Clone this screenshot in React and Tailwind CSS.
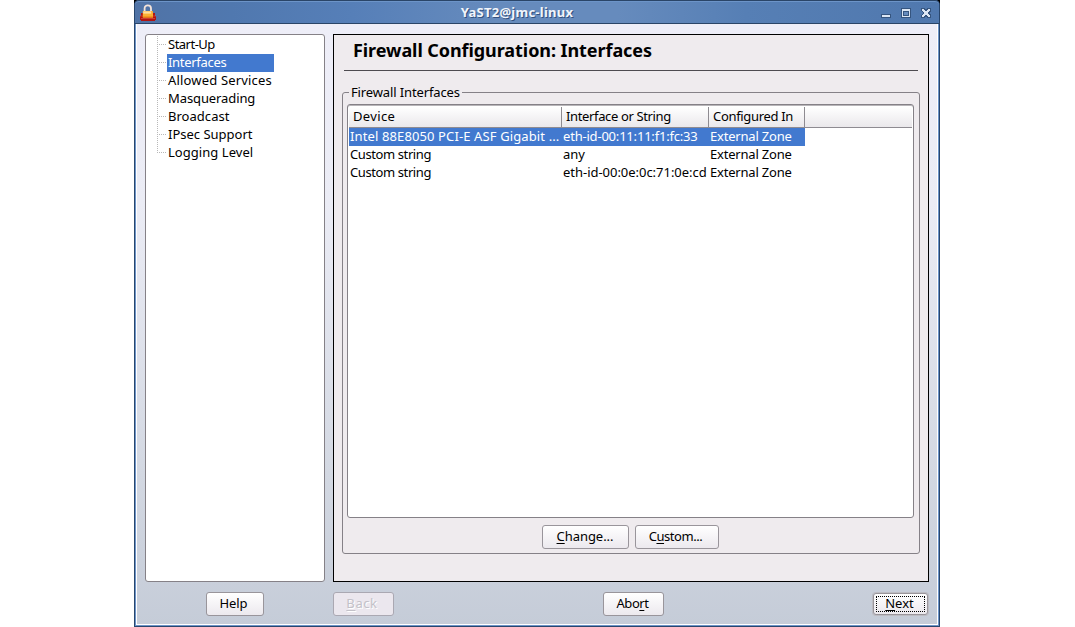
import React from 'react';

const navItems = [
  { label: 'Start-Up', tracking: 'tracking-[-0.5px]' },
  { label: 'Interfaces', tracking: 'tracking-[-0.3px]' },
  { label: 'Allowed Services', tracking: 'tracking-[0.17px]' },
  { label: 'Masquerading', tracking: 'tracking-[-0.1px]' },
  { label: 'Broadcast', tracking: 'tracking-[0.03px]' },
  { label: 'IPsec Support', tracking: 'tracking-[0px]' },
  { label: 'Logging Level', tracking: 'tracking-[0.05px]' },
];

const rows = [
  { device: 'Intel 88E8050 PCI-E ASF Gigabit ...', deviceTracking: 'tracking-[0.12px]', name: 'eth-id-00:11:11:f1:fc:33', nameTracking: 'tracking-[-0.2px]' },
  { device: 'Custom string', deviceTracking: 'tracking-[-0.4px]', name: 'any', nameTracking: 'tracking-[0px]' },
  { device: 'Custom string', deviceTracking: 'tracking-[-0.4px]', name: 'eth-id-00:0e:0c:71:0e:cd', nameTracking: 'tracking-[-0.03px]' },
];

function LockIcon() {
  return (
    <svg width="16" height="18" viewBox="0 0 16 18" className="block">
      <path d="M1 9h14v3h1v4h-1v1H1v-1H0v-4h1z" fill="#b01512" />
      <path d="M0 12h3M13 12h3M1 14.5h14" stroke="#dd5a4a" strokeWidth="0.6" />
      <path d="M4.6 8V4.6C4.6 2.2 6 1.4 7.8 1.4s3.2.8 3.2 3.2V8" fill="none" stroke="#f4e4da" strokeWidth="1.8" />
      <rect x="2.8" y="7" width="10.2" height="6.6" rx="0.6" fill="#fbb033" />
      <path d="M3.2 7.4h8v2.2h-8z" fill="#ffdfa0" />
      <path d="M2.8 12.4H13v1.2H2.8z" fill="#ee8a18" />
    </svg>
  );
}

function TitleBar() {
  return (
    <div className="flex h-[24px] shrink-0 items-center rounded-t-[4px] border-y border-y-[#2a4568] bg-[linear-gradient(90deg,#5073a6_0%,#5078af_12%,#567fb8_27%,#668bbd_45%,#668bbd_60%,#567fb5_76%,#5078ae_100%)] shadow-[inset_0_1px_0_#6c94c8]">
      <div className="w-[100px] pl-[5px] pt-[2px]"><LockIcon /></div>
      <div className="flex-1 pr-[81px] text-center text-[13px] font-bold leading-[20px] tracking-[0.25px] text-[#f1f5fb] [text-shadow:1px_1px_0_#34527f]">YaST2@jmc-linux</div>
      <svg width="52" height="14" viewBox="0 0 52 14" className="mr-[7px] mt-[2px] block" shapeRendering="crispEdges">
        <path d="M1 8h10v4H1z" fill="#36557f" />
        <path d="M2 9h8v2H2z" fill="#dce6f4" />
        <path d="M21 2h10v10H21z" fill="#36557f" />
        <path d="M22 3h8v8h-8z" fill="#dce6f4" />
        <path d="M23 5h6v5h-6z" fill="#36557f" />
        <path d="M24 6h4v3h-4z" fill="#668bbd" />
        <path d="M41 2h4l1 2 1-2h4v3l-2 2 2 2v3h-4l-1-2-1 2h-4V9l2-2-2-2z" fill="#36557f" />
        <path d="M42 3h2v1h1v1h2V4h1V3h2v2h-1v1h-1v2h1v1h1v2h-2v-1h-1V9h-2v1h-1v1h-2V9h1V8h1V6h-1V5h-1z" fill="#dce6f4" />
      </svg>
    </div>
  );
}

function Tree() {
  return (
    <div className="w-[180px] rounded-[3px] border border-[#858187] bg-white pt-px">
      {navItems.map((item, i) => (
        <div key={item.label} className="flex h-[18px] leading-[16px]">
          <div className={i === navItems.length - 1 ? 'ml-[11px] h-[9px] w-px bg-[repeating-linear-gradient(180deg,#b8b8b8_0_1px,transparent_1px_2px)]' : 'ml-[11px] h-[18px] w-px bg-[repeating-linear-gradient(180deg,#b8b8b8_0_1px,transparent_1px_2px)]'} />
          <div className="mt-[8px] h-px w-[9px] bg-[repeating-linear-gradient(90deg,transparent_0_1px,#b8b8b8_1px_2px)]" />
          <div className={i === 1 ? 'h-[18px] w-[107px] bg-[#4279cf] pl-px text-white' : 'w-[107px] pl-px'}>
            <span className={item.tracking}>{item.label}</span>
          </div>
        </div>
      ))}
    </div>
  );
}

function Button({ className, children }) {
  return (
    <button className={`flex items-center justify-center rounded-[3px] border pb-[3px] ${className}`}>
      <span>{children}</span>
    </button>
  );
}

const normal = 'border-[#99959b] bg-gradient-to-b from-white to-[#ece9ee]';

function Key({ children }) {
  return <span className="underline decoration-1 underline-offset-2">{children}</span>;
}

function Table() {
  return (
    <div className="mr-[1px] mt-[2px] flex h-[414px] flex-col rounded-[3px] border border-[#858187] bg-white px-px pt-[2px] shadow-[inset_0_1px_0_#b8b5b9]">
      <div className="flex h-[21px] shrink-0 border-b border-[#8e8b91] bg-gradient-to-b from-white to-[#eae8eb] leading-[19px]">
        <div className="w-[213px] border-r border-[#8e8b91] pl-[4px] tracking-[0.35px]">Device</div>
        <div className="w-[147px] border-r border-[#8e8b91] pl-[4px] tracking-[-0.36px]">Interface or String</div>
        <div className="w-[96px] border-r border-[#8e8b91] pl-[4px] tracking-[-0.32px]">Configured In</div>
      </div>
      {rows.map((row, i) => (
        <div key={i} className={i === 0 ? 'flex h-[18px] w-[456px] whitespace-nowrap bg-[#4279cf] leading-[16px] text-white' : 'flex h-[18px] w-[456px] whitespace-nowrap leading-[16px]'}>
          <div className={`w-[213px] pl-px ${row.deviceTracking}`}>{row.device}</div>
          <div className={`w-[147px] pl-px ${row.nameTracking}`}>{row.name}</div>
          <div className="w-[96px] pl-px tracking-[-0.2px]">External Zone</div>
        </div>
      ))}
    </div>
  );
}

export default function App() {
  return (
    <div className="h-[627px] w-[1075px] overflow-hidden bg-white font-['Noto_Sans',sans-serif] text-[13px] leading-[18px] tracking-[0.3px] text-black">
      <div className="ml-[134px] h-[627px] w-[806px] bg-black">
        <div className="flex h-[627px] flex-col rounded-t-[5px] border-x border-b border-[#28466d] bg-[#6d94c8]">
          <TitleBar />
          <div className="mx-px mb-px flex flex-1 flex-col border-x border-b border-white bg-[linear-gradient(180deg,#eeeef8_0%,#ebecf5_30%,#d3d8e2_75%,#c5ccd8_100%)] pl-[8px] pr-[8px] pt-[10px]">
            <div className="flex h-[548px] gap-[8px]">
              <Tree />
              <main className="h-[548px] w-[596px] border border-black bg-[#efebee] px-[8px]">
                <div className="mx-[2px] h-[36px] border-b border-[#4e4b50] pl-[9px] text-[18px] font-bold leading-[30px] tracking-[-0.07px]">Firewall Configuration: Interfaces</div>
                <fieldset className="mt-[11px] h-[472px] w-[578px] rounded-[3px] border border-[#858187] px-[4px]">
                  <legend className="ml-[2px] h-[20px] px-[2px] leading-[20px] tracking-[-0.13px]">Firewall Interfaces</legend>
                  <Table />
                  <div className="mr-[2px] mt-[7px] flex justify-center gap-[6px]">
                    <Button className={`h-[24px] w-[87px] tracking-[-0.05px] ${normal}`}><Key>C</Key>hange...</Button>
                    <Button className={`h-[24px] w-[84px] pr-[2px] tracking-[-0.45px] ${normal}`}>C<Key>u</Key>stom...</Button>
                  </div>
                </fieldset>
              </main>
            </div>
            <div className="mt-[10px] flex pl-[61px]">
              <Button className={`h-[24px] w-[58px] pr-[3px] tracking-[-0.1px] ${normal}`}>Help</Button>
              <Button className="ml-[69px] h-[24px] w-[61px] border-[#aaa8b2] bg-[#ebe7ee] pr-[3px] tracking-[0.6px] text-[#c3c1c8] [text-shadow:1px_1px_0_white]"><Key>B</Key>ack</Button>
              <Button className={`ml-[209px] h-[24px] w-[61px] pr-[2px] tracking-[-0.4px] ${normal}`}>Abo<Key>r</Key>t</Button>
              <Button className={`ml-[209px] mt-px h-[22px] w-[55px] pr-[2px] tracking-[0px] shadow-[0_0_0_1px_#bdbcc2] outline-dotted outline-1 -outline-offset-4 outline-black ${normal}`}><Key>N</Key>ext</Button>
            </div>
          </div>
        </div>
      </div>
    </div>
  );
}
